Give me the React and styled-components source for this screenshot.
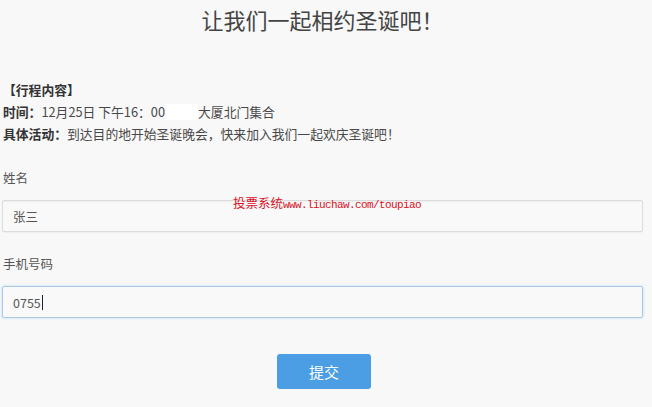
import React from "react";
import styled, { createGlobalStyle } from "styled-components";

const Global = createGlobalStyle`
  html, body { margin: 0; padding: 0; background: #f8f8f8; }
  body { font-family: "Noto Sans CJK SC", "Microsoft YaHei", sans-serif; color: #444; }
`;

const Page = styled.div`
  position: relative;
  width: 652px;
  height: 407px;
  padding: 0 9px 0 2px;
  box-sizing: border-box;
  display: flex;
  flex-direction: column;
`;

const Title = styled.h1`
  margin: 0;
  font-size: 22px;
  font-weight: 400;
  line-height: 38px;
  text-align: center;
  color: #444;
`;

const Info = styled.div`
  margin-top: 41px;
  padding-left: 1px;
  font-size: 12.8px;
  line-height: 22px;
  color: #484848;
`;

const Line = styled.div`
  white-space: nowrap;
`;

const Strong = styled.span`
  font-weight: 700;
  color: #333;
`;

const Redact = styled.span`
  display: inline-block;
  width: 33px;
  height: 16px;
  background: #fff;
  vertical-align: -3px;
`;

const Group = styled.div`
  display: flex;
  flex-direction: column;
  margin-top: ${(p) => p.$top}px;
`;

const Label = styled.label`
  padding-left: 1px;
  font-size: 12.5px;
  line-height: 22px;
  color: #555;
  margin-bottom: 11px;
`;

const Field = styled.div`
  height: 32px;
  box-sizing: border-box;
  display: flex;
  align-items: center;
  padding: 0 10px;
  font-size: 12.5px;
  color: #555;
  background: #f9f9f9;
  border: 1px solid ${(p) => (p.$focused ? "#a9c9e6" : "#dcdcdc")};
  border-radius: 2px;
  box-shadow: ${(p) =>
    p.$focused
      ? "0 0 3px rgba(102,175,233,0.35)"
      : "inset 0 1px 1px rgba(0,0,0,0.04), 0 1px 1px rgba(0,0,0,0.04)"};
`;

const Caret = styled.span`
  display: inline-block;
  width: 1px;
  height: 15px;
  background: #222;
  margin-left: 1px;
`;

const Actions = styled.div`
  display: flex;
  justify-content: center;
  margin-top: 36px;
  padding-left: 3px;
`;

const Button = styled.button`
  width: 94px;
  height: 35px;
  border: none;
  border-radius: 3px;
  background: #4b9ee3;
  color: #fff;
  font-family: inherit;
  font-size: 15px;
  cursor: pointer;
`;

const Watermark = styled.div`
  position: absolute;
  left: 233px;
  top: 195px;
  color: #d8101e;
  font-size: 12.5px;
  line-height: 16px;
  white-space: nowrap;
  pointer-events: none;
`;

const Mono = styled.span`
  font-family: "Liberation Mono", monospace;
  font-size: 11px;
  letter-spacing: -0.6px;
`;

export default function App() {
  return (
    <>
      <Global />
      <Page>
        <Title>让我们一起相约圣诞吧！</Title>
        <Info>
          <Line><Strong>【行程内容】</Strong></Line>
          <Line>
            <Strong>时间：</Strong>12月25日 下午16：00<Redact />大厦北门集合
          </Line>
          <Line>
            <Strong>具体活动：</Strong>到达目的地开始圣诞晚会，快来加入我们一起欢庆圣诞吧！
          </Line>
        </Info>
        <Group $top={22}>
          <Label>姓名</Label>
          <Field>张三</Field>
        </Group>
        <Group $top={21}>
          <Label>手机号码</Label>
          <Field $focused>
            0755<Caret />
          </Field>
        </Group>
        <Actions>
          <Button>提交</Button>
        </Actions>
        <Watermark>
          投票系统<Mono>www.liuchaw.com/toupiao</Mono>
        </Watermark>
      </Page>
    </>
  );
}
